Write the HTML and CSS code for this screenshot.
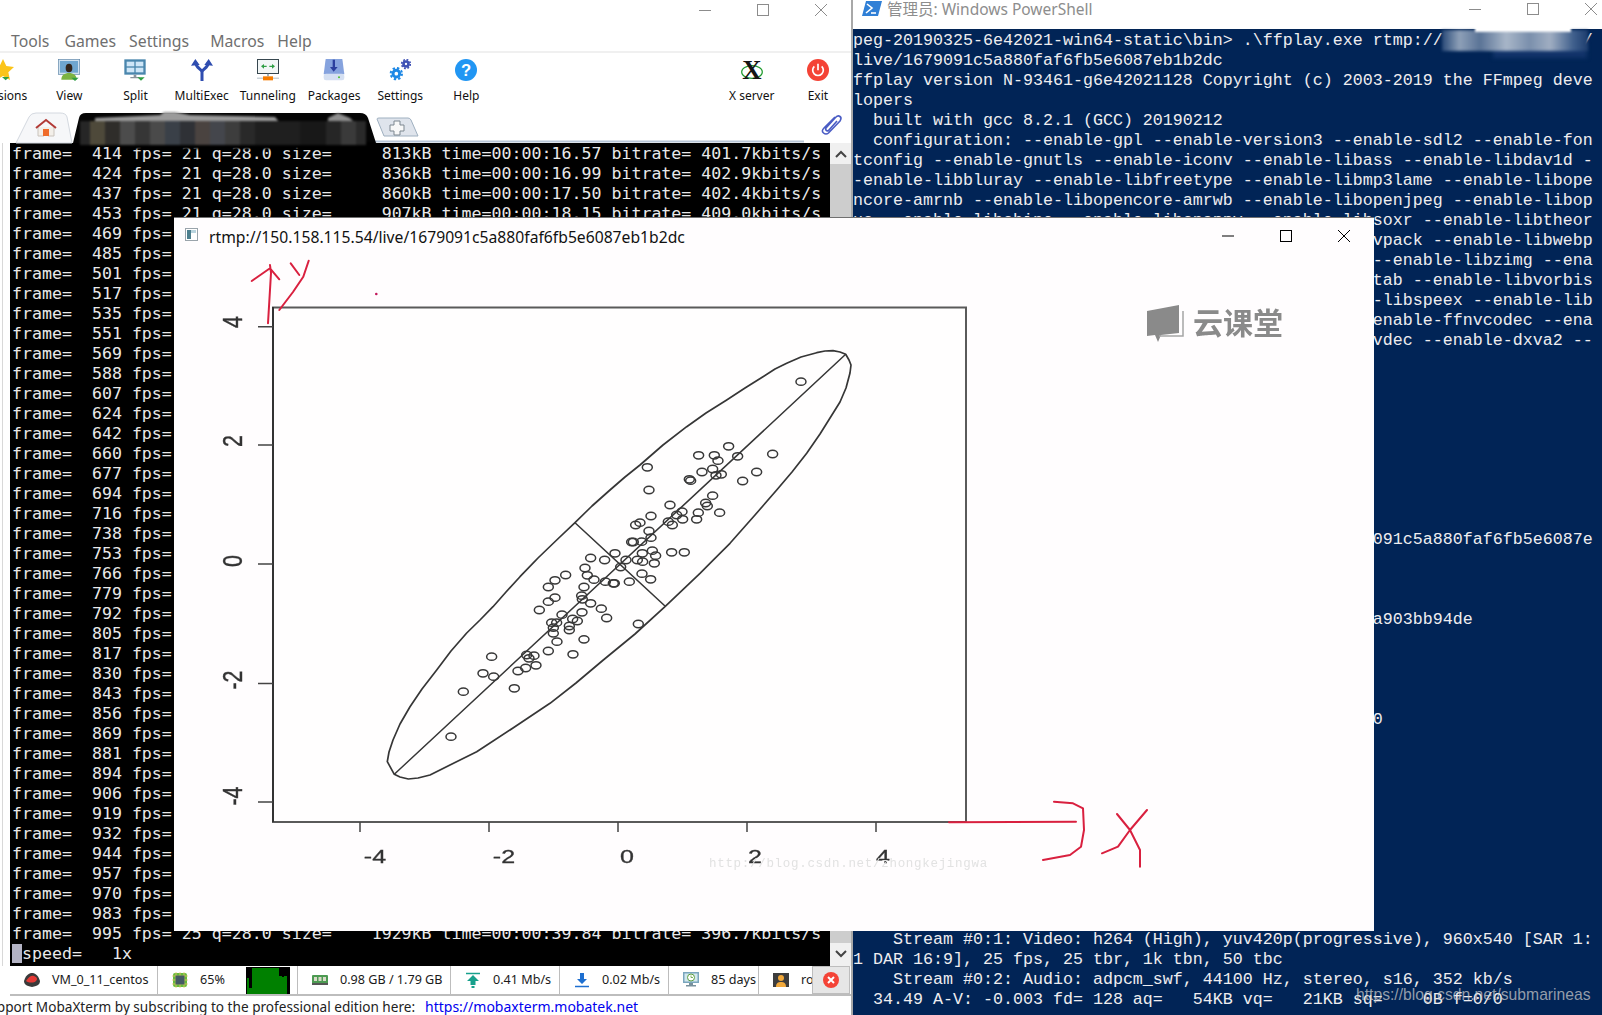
FILE: index.html
```html
<!DOCTYPE html>
<html lang="en">
<head>
<meta charset="utf-8">
<title>MobaXterm, PowerShell and ffplay</title>
<link rel="stylesheet" href="styles.css">
</head>
<body>
<div class="desktop">

<section class="win moba">
  <div class="titlebar moba-title">
    <svg class="wc" viewBox="0 0 12 12"><path d="M0 6.5h12"/></svg>
    <svg class="wc" viewBox="0 0 12 12"><rect x=".5" y=".5" width="11" height="11"/></svg>
    <svg class="wc" viewBox="0 0 12 12"><path d="M0 0l12 12M12 0L0 12"/></svg>
  </div>
  <nav class="menu">
    <span>Tools</span><span class="menu-nudge">Games</span><span>Settings</span><span class="menu-gap">Macros</span><span>Help</span>
  </nav>
  <div class="toolbar">
    <div class="tool tool-first">
      <svg class="ti" viewBox="0 0 66 66"><path d="M33 0l10 21 23 3-17 16 5 23-21-12-21 12 5-23L0 24l23-3z" fill="#fbc419"/><path d="M30 54h22L41 64z" fill="#2f9e44"/></svg>
      <span>Sessions</span>
    </div>
    <div class="tool">
      <svg class="ti" viewBox="0 0 66 66"><rect x="1" y="1" width="64" height="45" fill="#cfe1ef" stroke="#5f86a8" stroke-width="2"/><rect x="6" y="6" width="54" height="35" fill="#6fa6cf"/><path d="M10 62c0-14 10-20 23-20s23 6 23 20z" fill="#7cb342"/><ellipse cx="33" cy="27" rx="10" ry="13" fill="#33251b"/><path d="M40 56h22L51 66z" fill="#2f9e44"/></svg>
      <span>View</span>
    </div>
    <div class="tool">
      <svg class="ti" viewBox="0 0 66 66"><rect x="1" y="1" width="64" height="46" fill="#4a86ad"/><rect x="8" y="8" width="23" height="14" fill="#cfe6f7"/><rect x="35" y="8" width="23" height="14" fill="#cfe6f7"/><rect x="8" y="26" width="23" height="14" fill="#cfe6f7"/><rect x="35" y="26" width="23" height="14" fill="#cfe6f7"/><path d="M29 47h8v7h10v4H19v-4h10z" fill="#8a949c"/><path d="M40 55h22L51 65z" fill="#2f9e44"/></svg>
      <span>Split</span>
    </div>
    <div class="tool">
      <svg class="ti" viewBox="0 0 66 66"><path d="M33 66V40C33 28 14 30 14 10M33 40c0-12 19-10 19-30" fill="none" stroke="#2f4db0" stroke-width="9"/><path d="M0 20L13 0l13 18zM40 18L53 0l13 20z" fill="#2f4db0"/></svg>
      <span>MultiExec</span>
    </div>
    <div class="tool">
      <svg class="ti" viewBox="0 0 66 66"><rect x="1.500" y="1.500" width="63" height="42" fill="#f2f6f6" stroke="#37474f" stroke-width="3"/><path d="M12 22l9-7v5h8v4h-8v5zM54 22l-9-7v5h-8v4h8v5z" fill="#2f9e44"/><rect x="31" y="44" width="4" height="8" fill="#78909c"/><rect x="0" y="56" width="66" height="3" fill="#b0bec5"/><rect x="18" y="52" width="30" height="12" fill="#f57c00"/></svg>
      <span>Tunneling</span>
    </div>
    <div class="tool">
      <svg class="ti" viewBox="0 0 66 66"><path d="M8 0h50l6 46H2z" fill="#86a3de"/><rect x="2" y="44" width="62" height="20" rx="7" fill="#d5e0f2"/><circle cx="48" cy="55" r="3" fill="#4fc02d"/><path d="M29 2h7v22h8L32 38 21 24h8z" fill="#2b3f9e"/></svg>
      <span>Packages</span>
    </div>
    <div class="tool">
      <svg class="ti" viewBox="0 0 66 66"><circle cx="22" cy="44" r="10" fill="none" stroke="#1e88e5" stroke-width="9"/><circle cx="22" cy="44" r="17" fill="none" stroke="#1e88e5" stroke-width="6" stroke-dasharray="7 6.350"/><circle cx="51" cy="15" r="7.500" fill="none" stroke="#3f51b5" stroke-width="8"/><circle cx="51" cy="15" r="13" fill="none" stroke="#3f51b5" stroke-width="5" stroke-dasharray="5.500 4.700"/></svg>
      <span>Settings</span>
    </div>
    <div class="tool">
      <svg class="ti" viewBox="0 0 66 66"><circle cx="33" cy="33" r="33" fill="#2196f3"/><text x="33" y="51" text-anchor="middle" class="help-mark">?</text></svg>
      <span>Help</span>
    </div>
    <div class="tool tool-right">
      <svg class="ti" viewBox="0 0 66 66"><ellipse cx="33" cy="39" rx="31" ry="19" fill="none" stroke="#1f9a2d" stroke-width="3.500"/><text x="33" y="60" text-anchor="middle" class="x-mark">X</text></svg>
      <span>X server</span>
    </div>
    <div class="tool">
      <svg class="ti" viewBox="0 0 66 66"><circle cx="33" cy="33" r="33" fill="#f44336"/><path d="M22 22a16 16 0 1 0 22 0" fill="none" stroke="#fff" stroke-width="5"/><path d="M33 14v20" stroke="#fff" stroke-width="5"/></svg>
      <span>Exit</span>
    </div>
  </div>
  <div class="tabs">
    <svg class="tabs-art" viewBox="0 0 851 31">
      <path d="M375 29.500H804" stroke="#b7c5d6" stroke-width="2" fill="none"/>
      <path d="M16 31L29 5Q31 1 36 1H60Q66 1 67 5L72 31z" fill="#f6f7f9" stroke="#d4d9e0"/>
      <path d="M38 15v9h6v-6h4v6h6v-9" fill="#f3efe9" stroke="#c9c3bc"/>
      <rect x="43" y="17" width="6" height="7" fill="#ef6c2b"/>
      <path d="M36 16l10-8 10 8" fill="none" stroke="#b23a36" stroke-width="2"/>
      <path d="M73 31L79 6Q80 1 86 1H360Q366 1 368 6L376 31z" fill="#050505"/>
      <g class="smear">
        <rect x="132" y="30" width="243" height="7" fill="#000"/>
        <path d="M95 6L160 3L164 0H175L190 3L275 5L280 11H95z" fill="#9a9a9a"/>
        <path d="M328 6L338 1L350 6L356 12H328z" fill="#8f8f8f"/>
        <rect x="80" y="9" width="10" height="24" fill="#262626"/>
        <rect x="90" y="9" width="15" height="24" fill="#4e493a"/>
        <rect x="105" y="9" width="15" height="24" fill="#2f2d2a"/>
        <rect x="120" y="9" width="15" height="24" fill="#4c4c4c"/>
        <rect x="135" y="9" width="15" height="24" fill="#363636"/>
        <rect x="150" y="9" width="15" height="24" fill="#4a4a4a"/>
        <rect x="165" y="9" width="15" height="24" fill="#3a4048"/>
        <rect x="180" y="9" width="15" height="24" fill="#2f3136"/>
        <rect x="195" y="9" width="15" height="24" fill="#4a4340"/>
        <rect x="210" y="9" width="15" height="24" fill="#44464c"/>
        <rect x="225" y="9" width="15" height="24" fill="#3d3d3d"/>
        <rect x="240" y="9" width="15" height="24" fill="#292929"/>
        <rect x="255" y="9" width="45" height="24" fill="#1f1f1f"/>
        <rect x="300" y="9" width="26" height="24" fill="#181818"/>
        <rect x="326" y="9" width="15" height="24" fill="#262626"/>
        <rect x="341" y="9" width="15" height="24" fill="#3a3a3a"/>
        <rect x="356" y="9" width="10" height="24" fill="#2a2a2a"/>
      </g>
      <path d="M377 7q0-1 2-1H408q2 0 3 2L418 24H384z" fill="#dfe4ec" stroke="#9fb0c0"/>
      <path d="M394 9h6v4h4v6h-4v4h-6v-4h-4v-6h4z" fill="#f8f8f8" stroke="#7d8790"/>
      <path d="M835 5L824 16q-3 3-.5 5t5 0L840 9q2-3 0-4.500t-4.500 1L826 16q-1 1.500.5 2.500t2.500-.5L837 9" fill="none" stroke="#4a5cc4" stroke-width="1.600"/>
    </svg>
  </div>
  <div class="workspace">
    <div class="sidebar"></div>
<pre class="term">frame=  414 fps= 21 q=28.0 size=     813kB time=00:00:16.57 bitrate= 401.7kbits/s
frame=  424 fps= 21 q=28.0 size=     836kB time=00:00:16.99 bitrate= 402.9kbits/s
frame=  437 fps= 21 q=28.0 size=     860kB time=00:00:17.50 bitrate= 402.4kbits/s
frame=  453 fps= 21 q=28.0 size=     907kB time=00:00:18.15 bitrate= 409.0kbits/s
frame=  469 fps=
frame=  485 fps=
frame=  501 fps=
frame=  517 fps=
frame=  535 fps=
frame=  551 fps=
frame=  569 fps=
frame=  588 fps=
frame=  607 fps=
frame=  624 fps=
frame=  642 fps=
frame=  660 fps=
frame=  677 fps=
frame=  694 fps=
frame=  716 fps=
frame=  738 fps=
frame=  753 fps=
frame=  766 fps=
frame=  779 fps=
frame=  792 fps=
frame=  805 fps=
frame=  817 fps=
frame=  830 fps=
frame=  843 fps=
frame=  856 fps=
frame=  869 fps=
frame=  881 fps=
frame=  894 fps=
frame=  906 fps=
frame=  919 fps=
frame=  932 fps=
frame=  944 fps=
frame=  957 fps=
frame=  970 fps=
frame=  983 fps=
frame=  995 fps= 25 q=28.0 size=    1929kB time=00:00:39.84 bitrate= 396.7kbits/s
<span class="cursor"> </span>speed=   1x</pre>
    <div class="scroll">
      <svg class="chev" viewBox="0 0 12 8"><path d="M1 7l5-5 5 5" fill="none" stroke="#444" stroke-width="2"/></svg>
      <div class="thumb"></div>
      <svg class="chev" viewBox="0 0 12 8"><path d="M1 1l5 5 5-5" fill="none" stroke="#444" stroke-width="2"/></svg>
    </div>
  </div>
  <div class="status">
    <div class="st"><svg class="si" viewBox="0 0 16 16"><path d="M0 9c2-7 6-8 8-8s6 1 8 8c0 3-2 5-8 6-6-1-8-3-8-6z" fill="#3a3a3a"/><path d="M2 9c3-5 6-6 8-5 3 1 4 3 2 5s-7 2-10 0z" fill="#e53935"/></svg><span>VM_0_11_centos</span></div>
    <div class="st"><svg class="si" viewBox="0 0 16 16"><rect x="1" y="1" width="14" height="14" rx="2" fill="#66bb3a"/><path d="M0 4h16M0 8h16M0 12h16M4 0v16M8 0v16M12 0v16" stroke="#e9c46a" stroke-width=".8"/><rect x="3.500" y="3.500" width="9" height="9" fill="#455a64"/></svg><span>65%</span>
      <svg class="graph" viewBox="0 0 44 27"><rect width="44" height="27" fill="#000"/><path d="M1 27V11h2v10h3V1h27v8h3v1h2v-1h3v18z" fill="#008000"/></svg></div>
    <div class="st"><svg class="si" viewBox="0 0 16 16"><rect y="3" width="16" height="10" rx="1" fill="#4c9a52"/><rect x="2" y="5" width="3" height="4" fill="#d9d9c8"/><rect x="6.500" y="5" width="3" height="4" fill="#d9d9c8"/><rect x="11" y="5" width="3" height="4" fill="#d9d9c8"/><rect y="11" width="16" height="2" fill="#555"/></svg><span>0.98 GB / 1.79 GB</span></div>
    <div class="st"><svg class="si" viewBox="0 0 16 16"><path d="M1 1.500h14" stroke="#17a08c" stroke-width="1.500"/><path d="M8 3l6 6h-3.500v4h-5V9H2z" fill="#17a08c"/><path d="M6.500 14h3v2h-3z" fill="#17a08c"/></svg><span>0.41 Mb/s</span></div>
    <div class="st"><svg class="si" viewBox="0 0 16 16"><path d="M1 14.500h14" stroke="#1e6fd0" stroke-width="1.500"/><path d="M8 12l-5-5h3V1h4v6h3z" fill="#1e6fd0"/></svg><span>0.02 Mb/s</span></div>
    <div class="st"><svg class="si" viewBox="0 0 16 16"><rect width="16" height="11" fill="#7aa6bd"/><rect x="1.500" y="1.500" width="13" height="8" fill="#d3e8ef"/><circle cx="8" cy="5.500" r="3.500" fill="#fff" stroke="#5c9e3e"/><path d="M8 3.500v2h2" stroke="#5c9e3e" fill="none" stroke-width=".8"/><path d="M6 11h4v2h3v1.500H3V13h3z" fill="#78909c"/></svg><span>85 days</span></div>
    <div class="st st-clip"><svg class="si" viewBox="0 0 16 16"><rect y="1" width="16" height="14" fill="#3d3d3d"/><circle cx="8" cy="6" r="3" fill="#f2a93b"/><path d="M3 15c0-4 2-5 5-5s5 1 5 5z" fill="#f2a93b"/></svg><span>root</span></div>
    <div class="st-close"><svg class="close-dot" viewBox="0 0 16 16"><circle cx="8" cy="8" r="8" fill="#f44336"/><path d="M5 5l6 6M11 5l-6 6" stroke="#fff" stroke-width="2"/></svg></div>
  </div>
  <div class="promo"><span class="promo-text">Support MobaXterm by subscribing to the professional edition here:</span><a class="promo-link" href="#">https://mobaxterm.mobatek.net</a></div>
</section>

<section class="win ps">
  <div class="titlebar ps-title">
    <svg class="ps-icon" viewBox="0 0 20 15"><path d="M4 0h16l-4 15H0z" fill="#2f7fd6"/><path d="M5 3l5 4-6 5" fill="none" stroke="#fff" stroke-width="1.600"/><path d="M9 12h5" stroke="#fff" stroke-width="1.600"/></svg>
    <span class="ps-name">管理员: Windows PowerShell</span>
    <svg class="wc ps-wc-first" viewBox="0 0 12 12"><path d="M0 6.500h12"/></svg>
    <svg class="wc" viewBox="0 0 12 12"><rect x=".5" y=".5" width="11" height="11"/></svg>
    <svg class="wc" viewBox="0 0 12 12"><path d="M0 0l12 12M12 0L0 12"/></svg>
  </div>
<pre class="console">peg-20190325-6e42021-win64-static\bin> .\ffplay.exe rtmp://              /
live/1679091c5a880faf6fb5e6087eb1b2dc
ffplay version N-93461-g6e42021128 Copyright (c) 2003-2019 the FFmpeg deve
lopers
  built with gcc 8.2.1 (GCC) 20190212
  configuration: --enable-gpl --enable-version3 --enable-sdl2 --enable-fon
tconfig --enable-gnutls --enable-iconv --enable-libass --enable-libdav1d -
-enable-libbluray --enable-libfreetype --enable-libmp3lame --enable-libope
ncore-amrnb --enable-libopencore-amrwb --enable-libopenjpeg --enable-libop
us --enable-libshine --enable-libsnappy --enable-libsoxr --enable-libtheor
                                                    vpack --enable-libwebp
                                                    --enable-libzimg --ena
                                                    tab --enable-libvorbis
                                                    -libspeex --enable-lib
                                                    enable-ffnvcodec --ena
                                                    vdec --enable-dxva2 --









                                                    091c5a880faf6fb5e6087e



                                                    a903bb94de




                                                    0










    Stream #0:1: Video: h264 (High), yuv420p(progressive), 960x540 [SAR 1:
1 DAR 16:9], 25 fps, 25 tbr, 1k tbn, 50 tbc
    Stream #0:2: Audio: adpcm_swf, 44100 Hz, stereo, s16, 352 kb/s
  34.49 A-V: -0.003 fd= 128 aq=   54KB vq=   21KB sq=    0B f=0/0</pre>
  <div class="redact-low"></div>
  <div class="redact"></div>
  <div class="redact-top"></div>
</section>

<section class="win player">
  <div class="player-title">
    <svg class="doc-icon" viewBox="0 0 13 13"><rect x=".5" y=".5" width="12" height="12" fill="#fff" stroke="#9aa4ab"/><rect x="2" y="2" width="4" height="9" fill="#4d7f8e"/><rect x="6" y="2" width="5" height="3" fill="#b9d4de"/></svg>
    <span class="player-name">rtmp://150.158.115.54/live/1679091c5a880faf6fb5e6087eb1b2dc</span>
    <svg class="pc pc-first" viewBox="0 0 12 12"><path d="M0 6h12"/></svg>
    <svg class="pc" viewBox="0 0 12 12"><rect x=".5" y=".5" width="11" height="11"/></svg>
    <svg class="pc" viewBox="0 0 12 12"><path d="M0 0l12 12M12 0L0 12"/></svg>
  </div>
  <svg class="frame" viewBox="174 254 1200 677">
    <defs><ellipse id="o" rx="15" ry="11" fill="none" stroke="#383838" stroke-width="4.500"/></defs>
    <g class="soft">
      <rect x="273" y="307.500" width="693" height="514.500" fill="#fffefe" stroke="#5a5a5a" stroke-width="2"/>
      <path d="M273 307v515" stroke="#333" stroke-width="2"/>
      <path d="M258 326.700h15M258 445h15M258 564h15M258 683.500h15M258 802h15M360 822v10M489 822v10M618 822v10M747 822v10M876 822v10" stroke="#444" stroke-width="1.500" fill="none"/>
      <g class="ylabels">
        <text transform="translate(242 322) rotate(-90) scale(1.130 1.450)" text-anchor="middle">4</text>
        <text transform="translate(242 441) rotate(-90) scale(1.130 1.450)" text-anchor="middle">2</text>
        <text transform="translate(242 561) rotate(-90) scale(1.130 1.450)" text-anchor="middle">0</text>
        <text transform="translate(242 680) rotate(-90) scale(1.130 1.450)" text-anchor="middle">-2</text>
        <text transform="translate(242 796) rotate(-90) scale(1.130 1.450)" text-anchor="middle">-4</text>
      </g>
      <g class="xlabels">
        <text transform="translate(375 863) scale(1.320 1)" text-anchor="middle">-4</text>
        <text transform="translate(504 863) scale(1.320 1)" text-anchor="middle">-2</text>
        <text transform="translate(627 863) scale(1.320 1)" text-anchor="middle">0</text>
        <text transform="translate(755 863) scale(1.320 1)" text-anchor="middle">2</text>
        <text transform="translate(883 863) scale(1.320 1)" text-anchor="middle">4</text>
      </g>
      <text class="faint" x="709" y="867">http://blog.csdn.net/zhongkejingwa</text>
      <path d="M394.300 774.300L387.300 761.700 389 752 393 740 400 724 410 706.700 422 689 436.700 670 451 651 466.700 633 480 620 493 606.700 506 592 520 576.700 538 558 556.700 540 575 522.700 592 506 610 490 625 477 640 465 663 445 686.700 426.700 706 413 726.700 400 745 388 763 376.700 775 369 786.700 363.300 801 357 816.700 352.700 825 351 833 350.700 840 352 845.700 354.300 849 360 851 365 850 373 846 388 840 402 833 413.300 820 434 806.700 453.300 792 472 776.700 490 755 515 730 543.300 700 573.300 665 606.700 635 634 603.300 660 576 683 550 703.300 513 728 476.700 751.700 452 764 430 775 418 778 408.300 779 400 777z" fill="none" stroke="#363636" stroke-width="1.700" stroke-linejoin="round"/>
      <path d="M394.300 774.300L845.700 354.300M575 522.700L665 606" fill="none" stroke="#363636" stroke-width="1.500"/>
      <g transform="translate(500 330) scale(.3333)">
        <use href="#o" x="903" y="155"/><use href="#o" x="686" y="349"/><use href="#o" x="596" y="376"/><use href="#o" x="643" y="376"/><use href="#o" x="654" y="392"/><use href="#o" x="713" y="379"/><use href="#o" x="818" y="372"/><use href="#o" x="442" y="412"/><use href="#o" x="638" y="417"/><use href="#o" x="606" y="426"/><use href="#o" x="770" y="426"/><use href="#o" x="664" y="433"/><use href="#o" x="648" y="436"/><use href="#o" x="568" y="448"/><use href="#o" x="572" y="452"/><use href="#o" x="728" y="453"/><use href="#o" x="447" y="480"/><use href="#o" x="638" y="497"/><use href="#o" x="510" y="525"/><use href="#o" x="617" y="519"/><use href="#o" x="622" y="528"/><use href="#o" x="546" y="545"/><use href="#o" x="530" y="555"/><use href="#o" x="595" y="548"/><use href="#o" x="659" y="548"/><use href="#o" x="453" y="558"/><use href="#o" x="548" y="568"/><use href="#o" x="590" y="568"/><use href="#o" x="505" y="575"/><use href="#o" x="517" y="585"/><use href="#o" x="420" y="578"/><use href="#o" x="407" y="585"/><use href="#o" x="447" y="603"/><use href="#o" x="453" y="623"/><use href="#o" x="425" y="635"/><use href="#o" x="395" y="636"/><use href="#o" x="400" y="636"/><use href="#o" x="515" y="667"/><use href="#o" x="553" y="667"/><use href="#o" x="345" y="670"/><use href="#o" x="427" y="670"/><use href="#o" x="457" y="662"/><use href="#o" x="467" y="677"/><use href="#o" x="272" y="684"/><use href="#o" x="314" y="690"/><use href="#o" x="378" y="690"/><use href="#o" x="412" y="690"/><use href="#o" x="428" y="695"/><use href="#o" x="463" y="700"/><use href="#o" x="255" y="714"/><use href="#o" x="362" y="711"/><use href="#o" x="426" y="731"/><use href="#o" x="197" y="735"/><use href="#o" x="262" y="736"/><use href="#o" x="452" y="748"/><use href="#o" x="165" y="751"/><use href="#o" x="282" y="749"/><use href="#o" x="316" y="755"/><use href="#o" x="340" y="760"/><use href="#o" x="343" y="760"/><use href="#o" x="388" y="755"/><use href="#o" x="145" y="771"/><use href="#o" x="252" y="771"/><use href="#o" x="245" y="797"/><use href="#o" x="165" y="803"/><use href="#o" x="247" y="808"/><use href="#o" x="145" y="815"/><use href="#o" x="272" y="820"/><use href="#o" x="118" y="840"/><use href="#o" x="304" y="836"/><use href="#o" x="246" y="847"/><use href="#o" x="186" y="854"/><use href="#o" x="320" y="864"/><use href="#o" x="155" y="878"/><use href="#o" x="170" y="878"/><use href="#o" x="218" y="867"/><use href="#o" x="232" y="873"/><use href="#o" x="415" y="882"/><use href="#o" x="208" y="888"/><use href="#o" x="160" y="893"/>
      </g>
      <g transform="translate(360 540) scale(.3333)">
        <use href="#o" x="580" y="280"/><use href="#o" x="628" y="270"/><use href="#o" x="672" y="298"/><use href="#o" x="591" y="305"/><use href="#o" x="565" y="333"/><use href="#o" x="639" y="343"/><use href="#o" x="395" y="350"/><use href="#o" x="500" y="345"/><use href="#o" x="522" y="347"/><use href="#o" x="507" y="355"/><use href="#o" x="528" y="376"/><use href="#o" x="497" y="384"/><use href="#o" x="474" y="393"/><use href="#o" x="369" y="400"/><use href="#o" x="401" y="410"/><use href="#o" x="463" y="445"/><use href="#o" x="310" y="455"/><use href="#o" x="273" y="590"/>
      </g>
      <g class="logo">
        <path d="M1147 311l32-6v28l-18 2-3 7-3-7-8 1z" fill="#8a8a8a"/>
        <path d="M1183 311v25h-24" fill="none" stroke="#a5a5a5" stroke-width="1.500"/>
        <text x="1193" y="334">云课堂</text>
      </g>
    </g>
    <g class="ink">
      <path d="M268 323.300L271 273 270 265M251.700 281L270 268.300 279.300 279.300M290.700 263.300L299.300 275M308.700 260.700L303.300 276.700 293 292 279.300 310"/>
      <path d="M949 822.300L1076 821.700M1054 801.700L1073 803.300 1083 808.300 1084 830 1081 846.700 1070 855 1043 860M1117 814L1130 830 1140 850 1140 866.700M1147 810L1130 830 1118 846.700 1102 853.300"/>
      <circle cx="376.300" cy="294" r="1.300" class="ink-dot"/>
    </g>
  </svg>
</section>

<div class="csdn">https://blog.csdn.net/submarineas</div>
</div>
</body>
</html>
```
FILE: styles.css
```css
* { box-sizing: border-box; }
html, body { margin: 0; padding: 0; background: #fff; }
.desktop { position: relative; width: 1602px; height: 1015px; overflow: hidden; font-family: "Open Sans", "Noto Sans", sans-serif; }
.win { position: absolute; top: 0; }

/* generic window chrome */
.titlebar { display: flex; align-items: center; justify-content: flex-end; background: #fff; }
.wc { width: 12px; height: 12px; fill: none; stroke: #8c8c8c; stroke-width: 1; flex: none; }

/* MobaXterm */
.moba { left: 0; width: 853px; height: 1015px; display: flex; flex-direction: column; background: #fff; border-right: 2px solid #a8a8a8; }
.moba-title { height: 30px; gap: 46px; padding: 0 24px 11px 0; }
.menu { height: 24px; display: flex; gap: 13px; margin-top: -1px; padding: 1px 0 0 11px; border-bottom: 2px solid #f0f0f0; font-size: 15.8px; line-height: 22px; color: #6f6f6f; font-family: "Noto Sans", sans-serif; }
.menu + .toolbar { margin-top: 1px; }
.menu-nudge { margin-left: 2px; }
.menu-gap { margin-left: 8px; }
.toolbar { height: 58px; display: flex; margin-left: -30px; padding-top: 5px; }
.tool { width: 66.2px; display: flex; flex-direction: column; align-items: center; gap: 6px; font-size: 12px; line-height: 18px; color: #111; white-space: nowrap; font-family: "Noto Sans", sans-serif; }
.tool-right { margin-left: auto; }
.ti { width: 22px; height: 22px; flex: none; }
.help-mark { font: bold 50px "Liberation Sans", sans-serif; fill: #fff; }
.x-mark { font: bold 80px "Liberation Serif", serif; fill: #151515; }
.tabs { height: 31px; position: relative; z-index: 2; }
.tabs-art { display: block; width: 851px; height: 31px; overflow: visible; }
.smear { filter: blur(.8px); }
.workspace { height: 823px; display: flex; }
.sidebar { width: 10px; flex: none; background: linear-gradient(90deg, #fff 0, #fff 2px, #d8d8d8 2px, #d8d8d8 3px, #fff 3px); }
.term { width: 820px; flex: none; margin: 0; padding: 1px 0 0 2px; background: #000; color: #e9e9e9; font: 16.6px/20px "DejaVu Sans Mono", monospace; overflow: hidden; }
.cursor { background: #b3b3c4; }
.scroll { flex: 1; background: #f0f0f0; display: flex; flex-direction: column; align-items: center; padding: 7px 0 8px; gap: 6px; }
.chev { width: 12px; height: 8px; flex: none; }
.thumb { flex: 1; width: 100%; background: #cdcdcd; margin-bottom: 1px; }
.status { height: 30px; display: grid; grid-template-columns: 148px 140px 153px 109px 109px 90px 53px 38px; margin-left: 10px; border-bottom: 2px solid #bdbdbd; font: 12.6px/28px "Noto Sans", sans-serif; color: #1a1a1a; }
.st { display: flex; align-items: center; gap: 12px; padding-left: 14px; border-right: 1px solid #bdbdbd; white-space: nowrap; overflow: hidden; position: relative; }
.st-clip { border-right: 0; }
.si { width: 16px; height: 16px; flex: none; }
.graph { width: 44px; height: 27px; margin-left: auto; margin-right: 7px; flex: none; }
.st-close { background: #e6e6e6; border: 1px solid #bdbdbd; display: flex; align-items: center; justify-content: center; margin-bottom: -1px; height: 28px; }
.close-dot { width: 16px; height: 16px; }
.promo { flex: 1; padding-top: 1px; white-space: nowrap; overflow: hidden; font: 14px/19px "Noto Sans", sans-serif; color: #222; }
.promo-text { margin-left: -19px; font-size: 13.6px; }
.promo-link { margin-left: 10px; color: #0000ee; text-decoration: none; }

/* PowerShell */
.ps { left: 853px; width: 749px; height: 1015px; background: #012456; }
.ps-title { height: 29px; padding: 0 5px 11px 9px; gap: 46px; justify-content: flex-start; }
.ps-icon { width: 20px; height: 15px; flex: none; margin-top: -1px; }
.ps-name { margin-left: -41px; font: 15.5px/20px "Noto Sans", "Noto Sans CJK SC", sans-serif; color: #8d8d8d; white-space: nowrap; }
.ps-wc-first { margin-left: auto; }
.console { margin: 0; padding: 2px 0 0; color: #eeedf0; font: 16.67px/19.97px "Liberation Mono", monospace; overflow: hidden; }
.redact { position: absolute; left: 589px; top: 30px; width: 146px; height: 21px; filter: blur(1.500px); background: linear-gradient(90deg, #2a4a78 0, #8ea0b8 12%, #5a7396 26%, #a8b6c8 44%, #7a8fac 60%, #a0aec2 74%, #3f5f8c 90%, #1d3d6e 100%); }
.redact-low { position: absolute; left: 640px; top: 44px; width: 94px; height: 14px; filter: blur(2px); background: #12346a; }
.redact-top { position: absolute; left: 622px; top: 26px; width: 96px; height: 6px; filter: blur(1px); background: #fff; }

/* ffplay */
.player { left: 174px; top: 217px; width: 1200px; height: 714px; background: #fffdfe; border-top: 1px solid #707070; }
.player-title { height: 36px; display: flex; align-items: center; padding: 0 24px 0 11px; gap: 46px; }
.doc-icon { width: 13px; height: 13px; flex: none; margin-top: -3px; }
.player-name { margin-left: -35px; padding-top: 1px; font: 15.7px/22px "Noto Sans", sans-serif; color: #111; white-space: nowrap; }
.pc { width: 12px; height: 12px; flex: none; fill: none; stroke: #000; stroke-width: 1; }
.pc-first { margin-left: auto; }
.frame { display: block; width: 1200px; height: 677px; }
.soft { filter: blur(.35px); }
.ylabels text, .xlabels text { font: 19px "Liberation Sans", sans-serif; fill: #333; stroke: #333; stroke-width: .3px; }
.faint { font: 12.5px "Liberation Mono", monospace; letter-spacing: .7px; fill: #e2e2e2; filter: blur(.7px); }
.logo text { font: 600 30px "Noto Sans CJK SC", sans-serif; fill: #8a8a8a; }
.ink path { fill: none; stroke: #d9203f; stroke-width: 2; stroke-linecap: round; stroke-linejoin: round; }
.ink-dot { fill: #c2185b; }

.csdn { position: absolute; left: 1356px; top: 985px; font: 15.7px/20px "Liberation Sans", sans-serif; color: rgba(205, 205, 205, .72); white-space: nowrap; }
```
